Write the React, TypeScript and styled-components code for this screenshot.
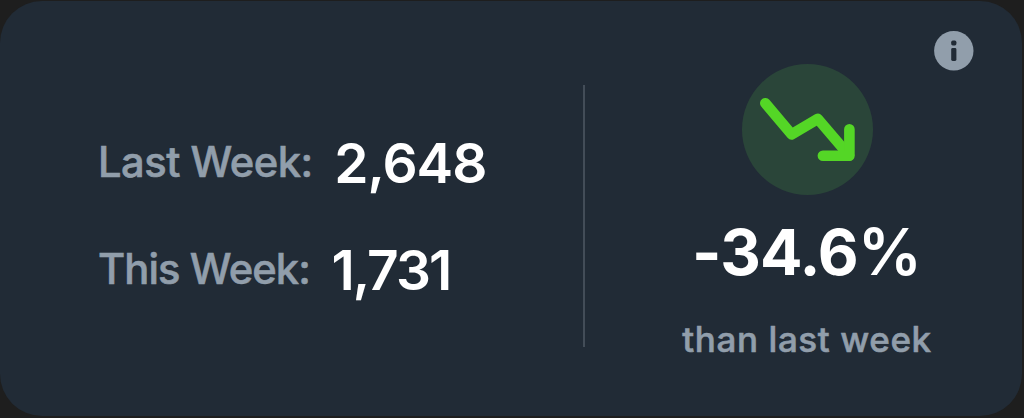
import React, { FC } from 'react';
import styled, { createGlobalStyle } from 'styled-components';

interface TextProps {
  size: number;
  weight: number;
  spacing?: number;
}

const GlobalStyle = createGlobalStyle`
  * {
    box-sizing: border-box;
  }

  body {
    margin: 0;
    background-color: #1e1e1e;
    font-family: Inter, 'Liberation Sans', sans-serif;
  }
`;

const Card = styled.section`
  position: relative;
  width: 1022px;
  height: 415px;
  margin-top: 1px;

  display: flex;

  background-color: #212b36;
  border-radius: 42px;
`;

const Weeks = styled.div`
  width: 583px;
  padding: 129px 0 0 98px;

  display: flex;
  flex-direction: column;
  gap: 43px;
`;

const Text = styled.span<TextProps>`
  font-weight: ${(props) => props.weight};
  font-size: ${(props) => props.size}px;
  line-height: 64px;
  letter-spacing: ${(props) => props.spacing || 0}px;
  white-space: nowrap;
`;

const Label = styled(Text)`
  color: #919eab;
  -webkit-text-stroke: 0.6px #919eab;
`;

const Value = styled(Text)`
  color: #fff;
`;

const Row = styled.div`
  height: 64px;

  display: flex;
  align-items: center;
  gap: 21.5px;

  ${Value} {
    margin-top: 2px;
  }
`;

const Divider = styled.div`
  width: 2px;
  height: 262px;
  margin: 84px 7px 0 0;

  background-color: #434d58;
`;

const Trend = styled.div`
  flex: 1;
  padding-top: 63px;

  display: flex;
  flex-direction: column;
  align-items: center;
`;

const TrendIcon = styled.div`
  width: 131px;
  height: 131px;

  background-color: #2a4539;
  border-radius: 50%;
`;

const Percent = styled.div`
  height: 64px;
  margin-top: 25px;

  display: flex;
`;

const Caption = styled.div`
  height: 64px;
  margin-top: 23px;
`;

const InfoButton = styled.button`
  position: absolute;
  top: 29px;
  right: 48px;
  width: 40px;
  height: 41px;
  padding: 0;

  background: none;
  border: none;
`;

const TrendDownIcon: FC = () => (
  <svg
    width="131"
    height="131"
    viewBox="0 0 131 131"
    fill="none"
    stroke="#54d626"
    strokeWidth="10.6"
    strokeLinecap="round"
    strokeLinejoin="round"
  >
    <path d="M23.3 39.2 49.6 70.4 75.8 54.9 107 91.4" />
    <path d="M107.4 65.2V91.7H80.9" />
  </svg>
);

const InfoIcon: FC = () => (
  <svg width="40" height="41" viewBox="0 0 40 41" display="block">
    <circle cx="19.8" cy="20.7" r="19.7" fill="#919eab" />
    <rect x="17.2" y="10.6" width="5.2" height="4.8" rx="1.6" fill="#212b36" />
    <rect x="17.2" y="18" width="5.2" height="13" rx="1.4" fill="#212b36" />
  </svg>
);

const App: FC = () => {
  return (
    <>
      <GlobalStyle />
      <Card>
        <Weeks>
          <Row>
            <Label size={41.7} weight={500} spacing={-0.5}>
              Last Week:
            </Label>
            <Value size={55} weight={600} spacing={-1}>
              2,648
            </Value>
          </Row>
          <Row>
            <Label size={41.7} weight={500} spacing={-0.9}>
              This Week:
            </Label>
            <Value size={55} weight={600} spacing={-2}>
              1,731
            </Value>
          </Row>
        </Weeks>

        <Divider />

        <Trend>
          <TrendIcon>
            <TrendDownIcon />
          </TrendIcon>
          <Percent>
            <Value size={63} weight={700} spacing={-0.9}>
              -34.6
            </Value>
            <Value size={64} weight={600}>
              %
            </Value>
          </Percent>
          <Caption>
            <Label size={35} weight={500} spacing={0.6}>
              than last week
            </Label>
          </Caption>
        </Trend>

        <InfoButton aria-label="Info">
          <InfoIcon />
        </InfoButton>
      </Card>
    </>
  );
};

export default App;
